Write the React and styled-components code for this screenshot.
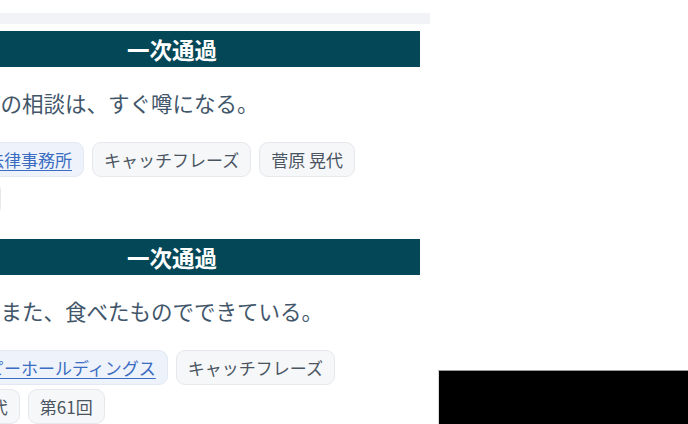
import React from 'react';
import styled, {createGlobalStyle} from 'styled-components'

const entries = [
    {
        copy: "田舎町の相談は、すぐ噂になる。",
        tags: [
            {label: "あさひ法律事務所", link: true},
            {label: "キャッチフレーズ"},
            {label: "菅原 晃代"},
            {label: "第61回"},
        ]
    },
    {
        copy: "人間もまた、食べたものでできている。",
        tags: [
            {label: "キユーピーホールディングス", link: true},
            {label: "キャッチフレーズ"},
            {label: "菅原 晃代"},
            {label: "第61回"},
        ]
    }
]

function App() {
return (
    <>
        <GlobalStyle />
        <Page>
            <Column>
                <TopStrip />
                {entries.map((entry, i) => (
                    <Card key={i}>
                        <Result>一次通過</Result>
                        <Copy>{entry.copy}</Copy>
                        <TagList>
                            {entry.tags.map((tag, j) => (
                                <Tag key={j} link={tag.link ? 1 : 0}>
                                    {tag.link ? <TagLink href="#">{tag.label}</TagLink> : tag.label}
                                </Tag>
                            ))}
                        </TagList>
                    </Card>
                ))}
            </Column>
        </Page>
        <PlayerBox />
    </>
)}

const GlobalStyle = createGlobalStyle`
    html, body {
        margin: 0;
        padding: 0;
        overflow: hidden;
        background: #ffffff;
        font-family: "Noto Sans CJK JP", "Noto Sans", sans-serif;
    }
`

const Page = styled.main`
    width: 688px;
    height: 424px;
    overflow: hidden;
`

const Column = styled.div`
    margin-left: -86px;
    width: 516px;
    padding-top: 13px;
    display: flex;
    flex-direction: column;
`

const TopStrip = styled.div`
    height: 11px;
    background: #f2f3f7;
    margin-bottom: 7px;
`

const Card = styled.article`
    padding: 0 10px;
    margin-bottom: 23px;
`

const Result = styled.h3`
    margin: 0;
    height: 36px;
    line-height: 36px;
    background: #044757;
    color: #ffffff;
    text-align: center;
    font-size: 22.5px;
    font-weight: 700;
`

const Copy = styled.p`
    margin: 21px 0 0;
    padding-left: 12px;
    font-size: 21.5px;
    line-height: 30px;
    color: #42566a;
    white-space: nowrap;
`

const TagList = styled.ul`
    list-style: none;
    margin: 24px 0 0;
    padding: 0;
    display: flex;
    flex-wrap: wrap;
    gap: 4px 8px;
`

const Tag = styled.li`
    box-sizing: border-box;
    height: 35px;
    padding: 4px 11px;
    font-size: 17px;
    line-height: 25px;
    color: #4a5561;
    white-space: nowrap;
    background: ${props => props.link ? '#eef3fb' : '#f6f7f9'};
    border: 1px solid ${props => props.link ? '#e2e9f4' : '#e6e8ec'};
    border-radius: 9px;
`

const TagLink = styled.a`
    color: #3a6cc2;
    text-decoration: underline;
    text-underline-offset: 3px;
`

const PlayerBox = styled.div`
    position: fixed;
    right: 0;
    bottom: 0;
    width: 249px;
    height: 53px;
    background: #000000;
    border-top: 1px solid #9a9a9a;
    border-left: 1px solid #d8d8d8;
`

export default App
